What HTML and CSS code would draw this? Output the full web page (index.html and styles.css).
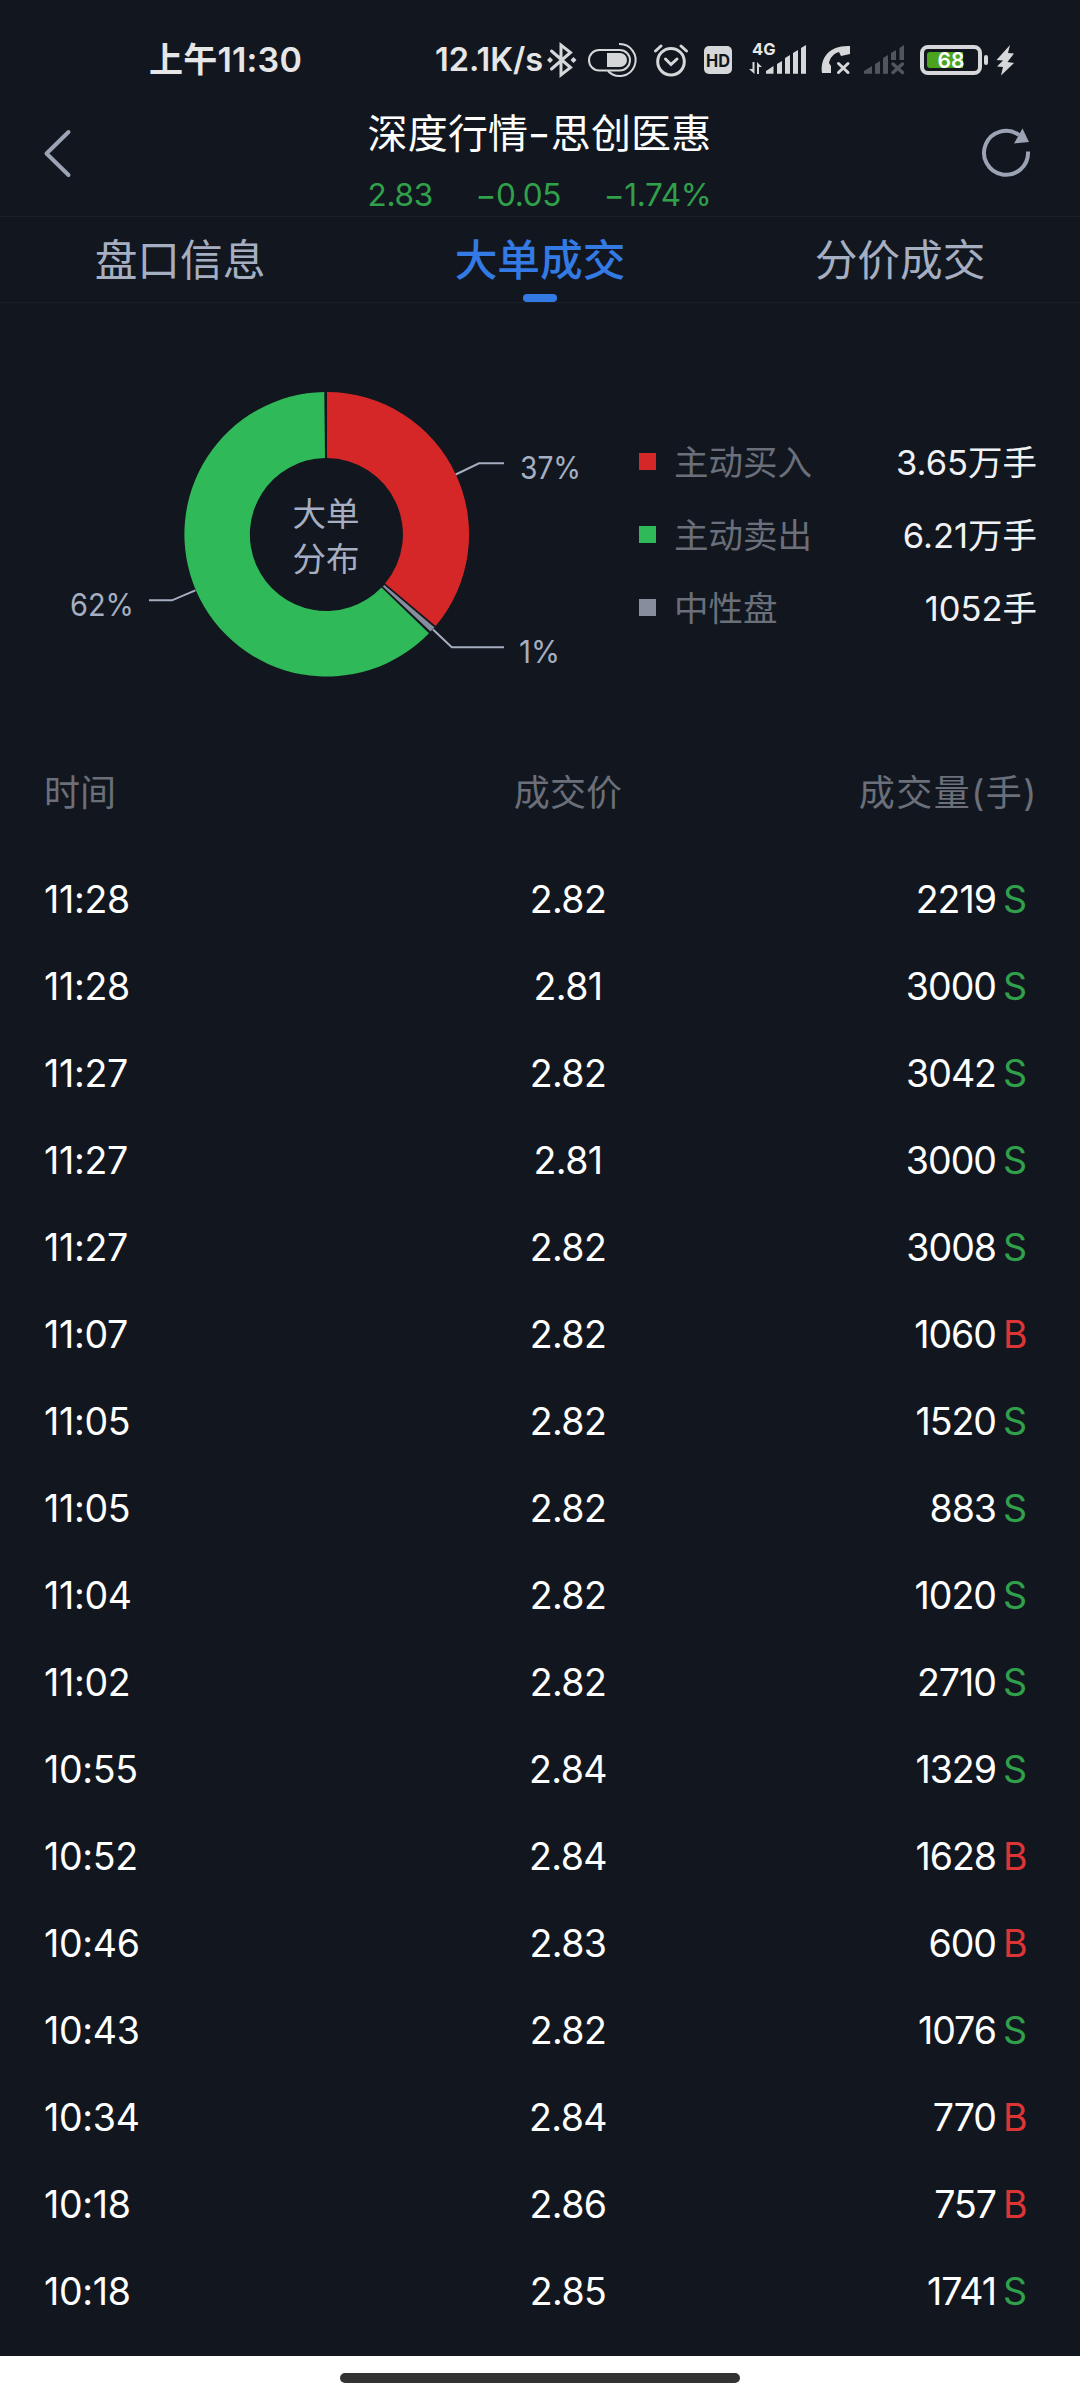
FILE: index.html
```html
<!DOCTYPE html>
<html lang="zh-CN">
<head>
<meta charset="utf-8">
<title>深度行情-思创医惠</title>
<link rel="stylesheet" href="styles.css">
</head>
<body>
<div class="screen">
  <div class="status">
    <span class="clock">上午11:30</span>
    <span class="speed">12.1K/s</span>
    <svg class="status-icons" viewBox="545 40 475 40" width="475" height="40">
      <g fill="none" stroke="#d6d7d9" stroke-width="3">
        <path d="M551.500 51 570.500 67.500 561 75V45L570.500 52.500 551.500 69" stroke-linecap="round"/>
        <rect x="589" y="50" width="41" height="20.500" rx="10.200" stroke-width="2"/>
        <path d="M619 44A16 16 0 1 1 608 71" stroke-width="2"/>
        <circle cx="671" cy="61.700" r="13.300"/>
        <path d="M665.500 59 671 64.500 677 59M655.500 51 661 46M686.500 51 681 46" stroke-linecap="round"/>
      </g>
      <g fill="#d6d7d9">
        <path d="M550 57 553 60 550 63 547 60ZM573.500 57 576.500 60 573.500 63 570.500 60Z"/>
        <path d="M607 53H620A7 7 0 0 1 620 67H607Z"/>
        <rect x="704" y="46" width="28" height="28" rx="5"/>
        <path d="M766 73.700V71L773.500 66V73.700ZM777 73.700V64L782 61V73.700ZM785 73.700V58L790 55V73.700ZM793 73.700V53L798 50V73.700ZM801 73.700V48L806 45V73.700Z"/>
        <path d="M752.500 62H754.500V74L749 69H752.500ZM757 74V62L762 67H759V74Z"/>
        <path d="M822 73C820 57 830 45 850 46L850 54 841 56 839 52C833 54 830 58 829 63L831 66 831 73Z"/>
        <rect x="984" y="55" width="4" height="10" rx="2"/>
        <path d="M1010 45 996.500 60 1003 60.500 997 66.500 1003 67 1001 75.500 1014 63 1007.500 62 1014 53.500 1008 53Z"/>
      </g>
      <path d="M838.500 63.500 848 72.500M848 63.500 838.500 72.500" stroke="#d6d7d9" stroke-width="3" stroke-linecap="round"/>
      <path d="M864 73.700V71L872 66V73.700ZM875 73.700V64L880 61V73.700ZM883 73.700V58L888 55V73.700ZM891 60V53L896 50V60ZM899.500 60V48L904 45V60Z" fill="#51555e"/>
      <path d="M893 64 902.500 72.500M902.500 64 893 72.500" stroke="#51555e" stroke-width="3.500" stroke-linecap="round"/>
      <rect x="922" y="47" width="58" height="26" rx="6" fill="none" stroke="#d6d7d9" stroke-width="4"/>
      <path d="M963 52V68H930A3 3 0 0 1 927 65V55A3 3 0 0 1 930 52Z" fill="#4ca41c"/>
      <text x="718" y="67" class="hd" text-anchor="middle" textLength="24" lengthAdjust="spacingAndGlyphs">HD</text>
      <text x="752" y="55.300" class="net" textLength="23.500" lengthAdjust="spacingAndGlyphs">4G</text>
      <text x="951" y="68.300" class="level" text-anchor="middle" textLength="27" lengthAdjust="spacingAndGlyphs">68</text>
    </svg>
  </div>

  <header class="header">
    <svg class="back" viewBox="0 0 30 50" width="30" height="50"><path d="M25.500 4 3.500 25.500 25.500 47" fill="none" stroke="#9ba3b5" stroke-width="4" stroke-linecap="round" stroke-linejoin="round"/></svg>
    <div class="heading">
      <h1 class="title">深度行情<span class="dash">-</span>思创医惠</h1>
      <div class="quote"><span>2.83</span><span>−0.05</span><span>−1.74%</span></div>
    </div>
    <svg class="refresh" viewBox="0 0 54 54" width="54" height="54"><path d="M49 25.500A22 22 0 1 1 40 9" fill="none" stroke="#9ba3b5" stroke-width="4"/><path d="M43.500 2.500 50 16 35 17.500Z" fill="#9ba3b5"/></svg>
  </header>

  <nav class="tabs">
    <div class="tab">盘口信息</div>
    <div class="tab active">大单成交</div>
    <div class="tab">分价成交</div>
  </nav>

  <section class="overview">
    <svg class="donut" viewBox="0 370 600 330" width="600" height="330">
      <path d="M327 392A142.300 142.300 0 0 1 435.600 626L385.100 583.600A76.500 76.500 0 0 0 327 458Z" fill="#d52727"/>
      <path d="M434.500 627.500 430.500 631.500 382.800 586.600 384.300 584.900Z" fill="#868d9c"/>
      <path d="M429 633.200A142.300 142.300 0 1 1 324.300 392L325 458A76.500 76.500 0 1 0 381.500 587.500Z" fill="#2fb958"/>
      <path d="M455.700 474.500 479 463.300H504M195.400 590.300 172 600.300H149M433 629.500 451.800 647.300H504" fill="none" stroke="#a5adc0" stroke-width="2"/>
      <g class="chart-label">
        <text x="520" y="479.300" textLength="61" lengthAdjust="spacingAndGlyphs">37%</text>
        <text x="70" y="616.300" textLength="64" lengthAdjust="spacingAndGlyphs">62%</text>
        <text x="519" y="663.300" textLength="41" lengthAdjust="spacingAndGlyphs">1%</text>
      </g>
      <g class="chart-name" text-anchor="middle">
        <text x="326" y="526.300">大单</text>
        <text x="326" y="570.700">分布</text>
      </g>
    </svg>
    <div class="legend">
      <div class="legend-row"><i class="swatch buy"></i><span class="legend-name">主动买入</span><span class="legend-value">3.65万手</span></div>
      <div class="legend-row"><i class="swatch sell"></i><span class="legend-name">主动卖出</span><span class="legend-value">6.21万手</span></div>
      <div class="legend-row"><i class="swatch neutral"></i><span class="legend-name">中性盘</span><span class="legend-value">1052手</span></div>
    </div>
  </section>

  <section class="trades">
    <div class="row head"><span>时间</span><span class="price">成交价</span><span class="volume">成交量(手)</span></div>
    <div class="row"><span class="time">11:28</span><span class="price">2.82</span><span class="volume">2219<b class="s">S</b></span></div>
    <div class="row"><span class="time">11:28</span><span class="price">2.81</span><span class="volume">3000<b class="s">S</b></span></div>
    <div class="row"><span class="time">11:27</span><span class="price">2.82</span><span class="volume">3042<b class="s">S</b></span></div>
    <div class="row"><span class="time">11:27</span><span class="price">2.81</span><span class="volume">3000<b class="s">S</b></span></div>
    <div class="row"><span class="time">11:27</span><span class="price">2.82</span><span class="volume">3008<b class="s">S</b></span></div>
    <div class="row"><span class="time">11:07</span><span class="price">2.82</span><span class="volume">1060<b class="b">B</b></span></div>
    <div class="row"><span class="time">11:05</span><span class="price">2.82</span><span class="volume">1520<b class="s">S</b></span></div>
    <div class="row"><span class="time">11:05</span><span class="price">2.82</span><span class="volume">883<b class="s">S</b></span></div>
    <div class="row"><span class="time">11:04</span><span class="price">2.82</span><span class="volume">1020<b class="s">S</b></span></div>
    <div class="row"><span class="time">11:02</span><span class="price">2.82</span><span class="volume">2710<b class="s">S</b></span></div>
    <div class="row"><span class="time">10:55</span><span class="price">2.84</span><span class="volume">1329<b class="s">S</b></span></div>
    <div class="row"><span class="time">10:52</span><span class="price">2.84</span><span class="volume">1628<b class="b">B</b></span></div>
    <div class="row"><span class="time">10:46</span><span class="price">2.83</span><span class="volume">600<b class="b">B</b></span></div>
    <div class="row"><span class="time">10:43</span><span class="price">2.82</span><span class="volume">1076<b class="s">S</b></span></div>
    <div class="row"><span class="time">10:34</span><span class="price">2.84</span><span class="volume">770<b class="b">B</b></span></div>
    <div class="row"><span class="time">10:18</span><span class="price">2.86</span><span class="volume">757<b class="b">B</b></span></div>
    <div class="row"><span class="time">10:18</span><span class="price">2.85</span><span class="volume">1741<b class="s">S</b></span></div>
  </section>

  <footer class="gesture"><div class="pill"></div></footer>
</div>
</body>
</html>
```
FILE: styles.css
```css
* { box-sizing: border-box; }
body {
  margin: 0;
  background: #12171f;
  color: #fff;
  font-family: Inter, "Noto Sans CJK SC", sans-serif;
}
.screen {
  display: flex;
  flex-direction: column;
  width: 1080px;
  height: 2400px;
  overflow: hidden;
}

/* status bar */
.status {
  display: flex;
  align-items: center;
  height: 96px;
  padding: 24px 60px 0 149px;
  flex: none;
  line-height: 74px;
  color: #e6e6e6;
  font-weight: 600;
  white-space: nowrap;
}
.clock { width: 286px; font-size: 34px; letter-spacing: 0.2px; }
.speed { width: 110px; font-size: 32.5px; letter-spacing: 0; }
.status-icons { flex: none; }
.hd { font: 700 17px Inter, sans-serif; fill: #12171f; }
.net { font: 700 16.5px Inter, sans-serif; fill: #e6e6e6; }
.level { font: 600 21.5px Inter, sans-serif; fill: #fff; }

/* header */
.header {
  display: flex;
  justify-content: space-between;
  height: 121px;
  flex: none;
  padding: 0 47px 0 43px;
  border-bottom: 1px solid #191e27;
}
.back { margin-top: 32px; }
.refresh { margin-top: 30px; }
.heading { width: 345px; margin-left: 26px; padding: 8px 0 0 1px; }
.title {
  margin: 0;
  display: flex;
  font-size: 40px;
  line-height: 60px;
  letter-spacing: 0.2px;
  font-weight: 400;
  white-space: nowrap;
}
.dash {
  display: flex;
  justify-content: center;
  width: 24px;
  transform: scaleX(1.25);
}
.quote {
  display: flex;
  justify-content: space-between;
  line-height: 40px;
  margin-top: 11px;
  font-size: 31.5px;
  letter-spacing: -0.3px;
  color: #31a04b;
}

/* tabs */
.tabs {
  display: grid;
  grid-template-columns: repeat(3, 1fr);
  height: 86px;
  flex: none;
  border-bottom: 1px solid #191e27;
}
.tab {
  font-size: 42.7px;
  line-height: 88px;
  text-align: center;
  color: #a6aec1;
}
.active {
  display: flex;
  flex-direction: column;
  align-items: center;
  line-height: 78px;
  padding-top: 5px;
  color: #347ae4;
  font-weight: 500;
}
.active::after {
  content: "";
  width: 34px;
  height: 8px;
  flex: none;
  margin-top: -6px;
  border-radius: 4px;
  background: #347ae4;
}

/* distribution chart and legend */
.overview {
  display: flex;
  height: 443px;
  flex: none;
  padding-top: 67px;
}
.donut { flex: none; }
.chart-label { font-size: 31.5px; fill: #a6aec1; }
.chart-name { font-size: 33.5px; fill: #a6aec1; }
.legend { flex: 1; padding: 55px 43px 0 39px; }
.legend-row {
  display: flex;
  align-items: center;
  height: 73px;
  font-size: 34.5px;
  line-height: 40px;
}
.swatch { width: 17px; height: 17px; margin-right: 18px; }
.buy { background: #d52727; }
.sell { background: #2fb958; }
.neutral { background: #868d9c; }
.legend-name { flex: 1; color: #6b6f7a; padding-top: 2px; }
.legend-value { color: #f0f1f5; padding-top: 2px; }

/* trade list */
.trades { flex: none; height: 1610px; }
.row {
  display: grid;
  grid-template-columns: 424px 200px 1fr;
  height: 87px;
  line-height: 89px;
  padding: 0 44px;
  font-size: 37.5px;
}
.head {
  height: 109px;
  line-height: 94px;
  font-size: 36px;
  color: #6b6f7a;
}
.time { letter-spacing: -0.3px; }
.price { text-align: center; letter-spacing: -0.6px; }
.volume { text-align: right; letter-spacing: -1px; }
.head .price { letter-spacing: 0.2px; }
.head .volume { letter-spacing: 1.5px; margin-right: -2px; }
.volume b {
  display: inline-block;
  width: 33px;
  margin-left: 7px;
  text-align: left;
  font-weight: 400;
}
.s { color: #31a04b; }
.b { color: #dd3535; }

/* system gesture bar */
.gesture {
  display: flex;
  justify-content: center;
  flex: 1;
  padding-top: 17px;
  background: #fff;
}
.pill { width: 400px; height: 10px; border-radius: 5px; background: #333; }
```
